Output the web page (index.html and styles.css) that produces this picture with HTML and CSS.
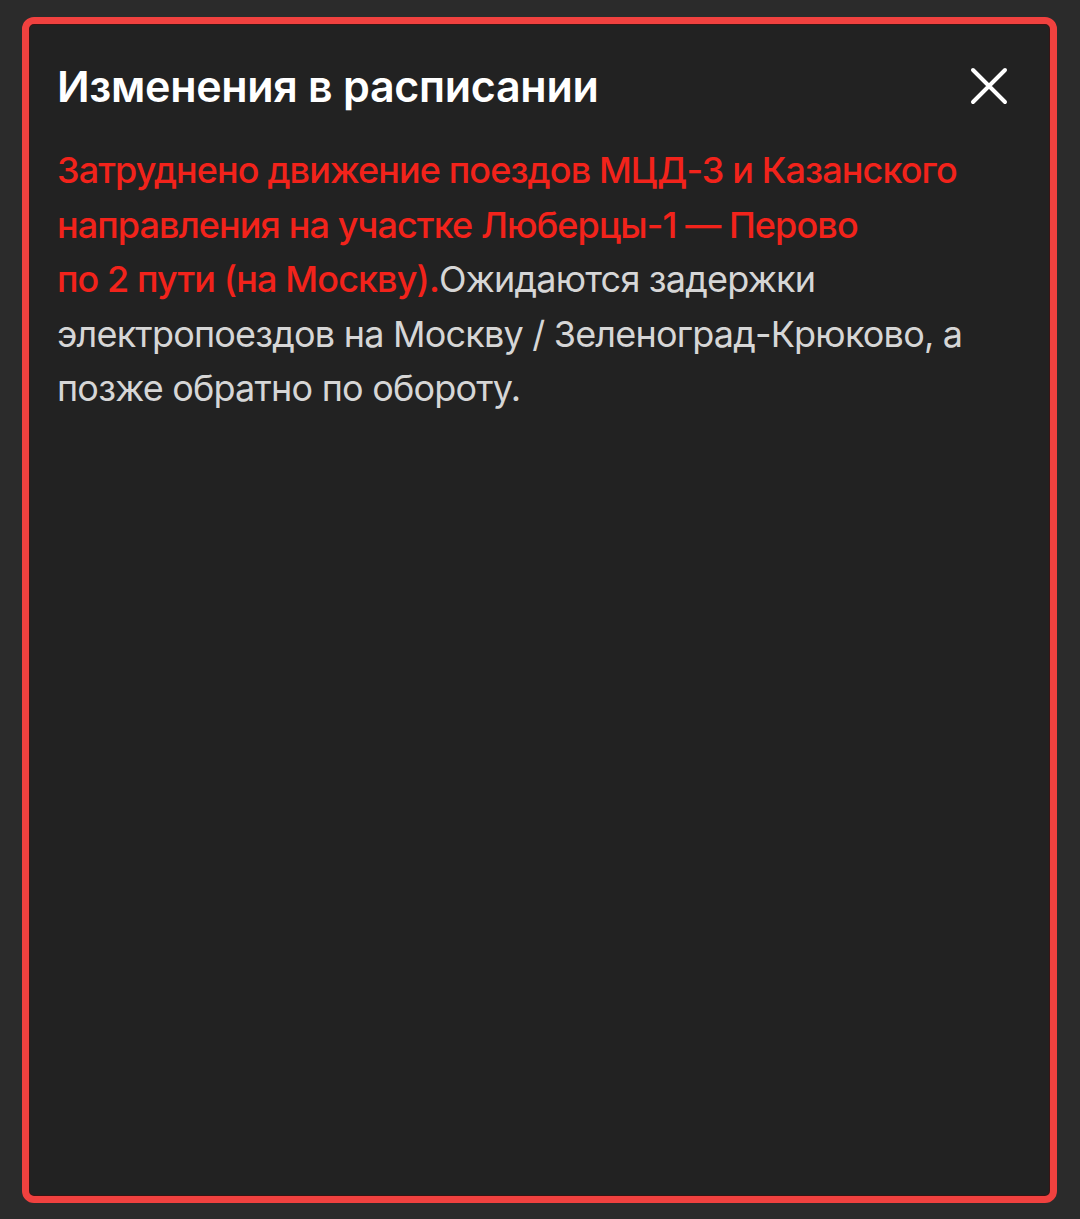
FILE: index.html
```html
<!DOCTYPE html>
<html lang="ru">
<head>
  <meta charset="UTF-8">
  <meta name="viewport" content="width=device-width, initial-scale=1.0">
  <title>Изменения в расписании</title>
  <link rel="stylesheet" href="styles.css">
</head>
<body>
  <div class="notice">
    <div class="notice-header">
      <h1>Изменения в расписании</h1>
      <button class="close-btn" aria-label="Закрыть">
        <svg width="40" height="40" viewBox="0 0 40 40">
          <path d="M4 4 L36 36 M36 4 L4 36" stroke="#fff" stroke-width="4" stroke-linecap="round" fill="none"/>
        </svg>
      </button>
    </div>

    <p class="notice-text">
      <span class="alert">Затруднено движение поездов МЦД-3 и Казанского<br>
      направления на участке Люберцы-1 — Перово<br>
      по 2 пути (на Москву).</span>Ожидаются задержки<br>
      электропоездов на Москву / Зеленоград-Крюково, а<br>
      позже обратно по обороту.
    </p>
  </div>
</body>
</html>
```

FILE: styles.css
```css
:root {
  --page-bg: #2b2b2b;
  --card-bg: #222222;
  --accent: #f0413f;
  --alert-text: #f2231b;
  --text: #d6d6d6;
}

* {
  box-sizing: border-box;
  margin: 0;
  padding: 0;
}

html, body {
  height: 100%;
}

body {
  background: var(--page-bg);
  font-family: Inter, 'Noto Sans', sans-serif;
  padding: 17px 23px 16px 22px;
  display: flex;
}

.notice {
  flex: 1;
  background: var(--card-bg);
  border: 7px solid var(--accent);
  border-radius: 12px;
  box-shadow: inset 0 0 0 1px #3a1414;
  padding: 0 28px;
}

.notice-header {
  display: flex;
  align-items: center;
  justify-content: space-between;
  padding-top: 36px;
}

h1 {
  color: #ffffff;
  font-size: 43px;
  font-weight: 600;
  line-height: 52px;
  letter-spacing: -0.3px;
}

.close-btn {
  background: none;
  border: none;
  width: 40px;
  height: 40px;
  margin-right: 13px;
  cursor: pointer;
}

.notice-text {
  margin-top: 31px;
  color: var(--text);
  font-size: 36px;
  line-height: 54.5px;
  letter-spacing: -0.8px;
}

.alert {
  color: var(--alert-text);
  font-weight: 500;
  letter-spacing: -0.9px;
}
```
